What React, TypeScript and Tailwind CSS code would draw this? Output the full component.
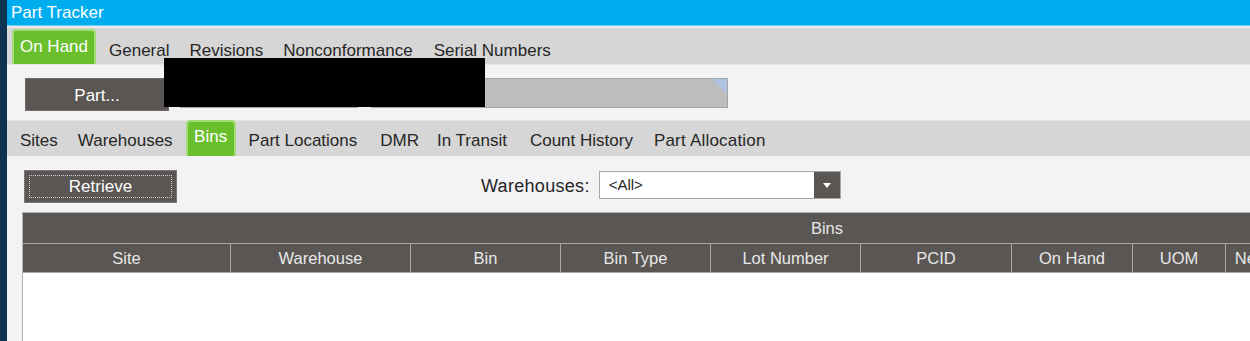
const FONT = { fontFamily: '"Liberation Sans", Arial, sans-serif' };

const BIN_COLUMNS = [
  { label: 'Site', width: 'w-[208px]' },
  { label: 'Warehouse', width: 'w-[180px]' },
  { label: 'Bin', width: 'w-[150px]' },
  { label: 'Bin Type', width: 'w-[150px]' },
  { label: 'Lot Number', width: 'w-[150px]' },
  { label: 'PCID', width: 'w-[151px]' },
  { label: 'On Hand', width: 'w-[121px]' },
  { label: 'UOM', width: 'w-[93px]' },
  { label: 'Nettable', width: 'w-[80px]' },
  { label: 'Dimension', width: 'w-[120px]' },
  { label: 'Site Name', width: 'w-[205px]' },
];

const TOP_TABS = [
  { label: 'General', className: 'ml-[13px]' },
  { label: 'Revisions', className: 'ml-[20px]' },
  { label: 'Nonconformance', className: 'ml-[20px]' },
  { label: 'Serial Numbers', className: 'ml-[21px]' },
];

const SUB_TABS_BEFORE = [
  { label: 'Sites', className: 'ml-[13px]' },
  { label: 'Warehouses', className: 'ml-[20px]' },
];

const SUB_TABS_AFTER = [
  { label: 'Part Locations', className: 'ml-[13px]' },
  { label: 'DMR', className: 'ml-[23px]' },
  { label: 'In Transit', className: 'ml-[18px]' },
  { label: 'Count History', className: 'ml-[23px]' },
  { label: 'Part Allocation', className: 'ml-[21px] tracking-[0.2px]' },
];

const GreenTab = ({ label, className }: { label: string; className: string }) => (
  <div
    className={`flex items-center justify-center rounded-t-[4px] border-2 border-b-0 border-[#a3dc78] bg-[#6abf2d] text-white ${className}`}
  >
    {label}
  </div>
);

const App = () => {
  return (
    <div
      className="relative flex w-[1250px] h-[341px] overflow-hidden bg-[#f3f3f5] text-[17px] leading-[20px] text-[#262626]"
      style={FONT}
    >
      <div className="w-[7px] shrink-0 bg-[#0c3351]" />

      <div className="flex flex-1 flex-col min-w-0">
        {/* title bar */}
        <div className="h-[25px] shrink-0 bg-[#00adef] pl-[4px] text-[17px] leading-[25px] text-white">
          Part Tracker
        </div>
        <div className="h-[1px] shrink-0 bg-[#6fd0f5]" />
        <div className="h-[2px] shrink-0 bg-[#e9e9e9]" />

        {/* main tabs */}
        <div className="flex h-[37px] shrink-0 items-end bg-[#d6d6d6] border-b border-[#e6e6e6]">
          <GreenTab label="On Hand" className="ml-[5px] h-[35px] w-[84px] pb-[2px]" />
          {TOP_TABS.map((tab) => (
            <div key={tab.label} className={`pb-[3px] ${tab.className}`}>
              {tab.label}
            </div>
          ))}
        </div>

        {/* part row */}
        <div className="mt-[13px] flex h-[33px] shrink-0 items-start">
          <div className="ml-[18px] flex h-[33px] w-[144px] items-center justify-center border border-[#6d6a67] bg-[#595653] pt-[2px] text-white">
            Part...
          </div>
          <div className="ml-[11px] h-[30px] w-[178px] border border-[#a4a4a4] bg-[#bdbdbd]" />
          <div className="relative ml-[13px] h-[30px] w-[357px] border border-[#a4a4a4] bg-[#bdbdbd]">
            <svg className="absolute right-0 top-0" width="15" height="15" viewBox="0 0 15 15">
              <polygon points="0,0 15,0 15,15" fill="#aec3e0" />
            </svg>
          </div>
        </div>

        {/* sub tabs */}
        <div className="mt-[9px] flex h-[36px] shrink-0 items-end bg-[#d6d6d6] border-t border-[#e6e6e6]">
          {SUB_TABS_BEFORE.map((tab) => (
            <div key={tab.label} className={`pb-[5px] ${tab.className}`}>
              {tab.label}
            </div>
          ))}
          <GreenTab label="Bins" className="ml-[13px] h-[36px] w-[50px] pb-[4px]" />
          {SUB_TABS_AFTER.map((tab) => (
            <div key={tab.label} className={`pb-[5px] ${tab.className}`}>
              {tab.label}
            </div>
          ))}
        </div>

        {/* retrieve row */}
        <div className="mt-[14px] flex h-[33px] shrink-0 items-start">
          <div className="ml-[17px] h-[33px] w-[153px] border border-[#7a7775] bg-[#595653] p-[4px]">
            <div className="flex h-full w-full items-center justify-center border border-dotted border-[#cfcfcf] text-white">
              Retrieve
            </div>
          </div>
          <div className="ml-[304px] mt-[6px] text-[18px] tracking-[0.3px]">Warehouses:</div>
          <div className="ml-[9px] mt-[1px] flex h-[28px] w-[242px] border border-[#a6a6a6] bg-white">
            <div className="flex flex-1 items-center pl-[9px] text-[15px]">&lt;All&gt;</div>
            <div className="flex w-[26px] items-center justify-center bg-[#595653]">
              <svg width="8" height="5" viewBox="0 0 8 5">
                <polygon points="0,0 8,0 4,5" fill="#ffffff" />
              </svg>
            </div>
          </div>
        </div>

        {/* bins grid */}
        <div className="ml-[15px] mt-[9px] flex-1 overflow-hidden border-l border-t border-[#b3b3b3] bg-white">
          <div className="w-[1608px] text-[16.5px] text-[#e8e8e8]">
            <div className="flex h-[30px] items-center justify-center bg-[#595653]">Bins</div>
            <div className="flex h-[30px] border-t border-b border-[#a9a9a9] bg-[#595653]">
              {BIN_COLUMNS.map((col) => (
                <div
                  key={col.label}
                  className={`flex shrink-0 items-center justify-center border-r border-[#a9a9a9] ${col.width}`}
                >
                  {col.label}
                </div>
              ))}
            </div>
          </div>
        </div>
      </div>

      {/* redacted area */}
      <div className="absolute left-[164px] top-[58px] h-[49px] w-[321px] bg-black" />
    </div>
  );
};

export default App;
